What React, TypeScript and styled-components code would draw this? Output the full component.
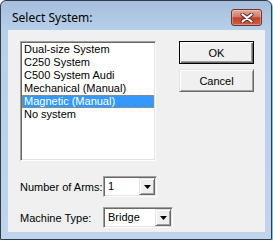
import React from 'react';
import styled, { createGlobalStyle } from 'styled-components';

const GlobalStyle = createGlobalStyle`
  html, body {
    margin: 0;
    padding: 0;
    background: #ffffff;
  }
  body {
    font-family: "Liberation Sans", Arial, sans-serif;
    font-size: 11px;
    color: #000;
  }
`;

const Window = styled.div`
  width: 272px;
  height: 240px;
  box-sizing: border-box;
  border: 1px solid #303c4a;
  border-radius: 6px 6px 0 0;
  background: linear-gradient(#a5bfdc, #b7cfe9 29px, #c0d5ec);
  box-shadow: 1px 1px 0 #5ed2e4;
  display: flex;
  flex-direction: column;
  padding: 0 6px 7px 7px;
`;

const TitleBar = styled.div`
  height: 29px;
  display: flex;
  align-items: flex-start;
  justify-content: space-between;
  padding: 8px 3px 0 4px;
  box-sizing: border-box;
`;

const Title = styled.span`
  font-family: "Noto Sans", "Open Sans", sans-serif;
  font-size: 12px;
  line-height: 16px;
  margin-top: 1px;
  color: #000;
`;

const CloseButton = styled.div`
  width: 31px;
  height: 17px;
  box-sizing: border-box;
  border: 1px solid #74332a;
  border-radius: 3px;
  background: linear-gradient(#e7a999, #d27a68 45%, #c0422d 52%, #cf5f48);
  box-shadow: inset 0 0 0 1px rgba(255, 255, 255, 0.3);
  display: flex;
  align-items: center;
  justify-content: center;
`;

const Client = styled.div`
  flex: 1;
  background: #f0f0f0;
  padding: 11px 0 0 12px;
`;

const TopRow = styled.div`
  display: flex;
  align-items: flex-start;
  gap: 23px;
`;

const ListBox = styled.div`
  width: 136px;
  height: 120px;
  box-sizing: border-box;
  background: #fff;
  border-style: solid;
  border-width: 1px;
  border-color: #a0a0a0 #fff #fff #a0a0a0;
  box-shadow: inset 1px 1px 0 #696969, inset -1px -1px 0 #e3e3e3;
  padding: 1px;
`;

const ListItem = styled.div<{ $selected?: boolean }>`
  height: 13px;
  line-height: 13px;
  padding-left: 2px;
  box-sizing: border-box;
  white-space: nowrap;
  background: ${p => (p.$selected ? '#3399ff' : 'transparent')};
  color: ${p => (p.$selected ? '#fff' : '#000')};
  outline: ${p => (p.$selected ? '1px dotted #c9823a' : 'none')};
  outline-offset: -1px;
`;

const ButtonColumn = styled.div`
  display: flex;
  flex-direction: column;
  gap: 5px;
`;

const PushButton = styled.div<{ $default?: boolean }>`
  width: 75px;
  height: 23px;
  box-sizing: border-box;
  background: #f0f0f0;
  display: flex;
  align-items: center;
  justify-content: center;
  border-style: solid;
  border-width: 1px;
  border-color: ${p => (p.$default ? '#000' : '#e3e3e3 #696969 #696969 #e3e3e3')};
  box-shadow: ${p =>
    p.$default
      ? 'inset 1px 1px 0 #fff, inset -1px -1px 0 #696969, inset -2px -2px 0 #a0a0a0'
      : 'inset 1px 1px 0 #fff, inset -1px -1px 0 #a0a0a0'};
`;

const Form = styled.div`
  margin-top: 15px;
  display: grid;
  grid-template-columns: 83px auto;
  row-gap: 10px;
  align-items: center;
`;

const Label = styled.span`
  white-space: nowrap;
`;

const Combo = styled.div<{ $width: number }>`
  width: ${p => p.$width}px;
  height: 21px;
  box-sizing: border-box;
  background: #fff;
  border-style: solid;
  border-width: 1px;
  border-color: #a0a0a0 #fff #fff #a0a0a0;
  box-shadow: inset 1px 1px 0 #696969, inset -1px -1px 0 #e3e3e3;
  display: flex;
  align-items: center;
  padding: 1px;
`;

const ComboText = styled.span`
  flex: 1;
  padding-left: 3px;
  line-height: 13px;
`;

const DropButton = styled.div`
  width: 16px;
  height: 17px;
  box-sizing: border-box;
  background: #f0f0f0;
  border-style: solid;
  border-width: 1px;
  border-color: #e3e3e3 #696969 #696969 #e3e3e3;
  box-shadow: inset 1px 1px 0 #fff, inset -1px -1px 0 #a0a0a0;
  display: flex;
  align-items: center;
  justify-content: center;
`;

const Arrow = () => (
  <svg width="7" height="4" viewBox="0 0 7 4">
    <path d="M0 0 H7 L3.5 4 Z" fill="#000" />
  </svg>
);

const systems = [
  'Dual-size System',
  'C250 System',
  'C500 System Audi',
  'Mechanical (Manual)',
  'Magnetic (Manual)',
  'No system',
];

export default function App() {
  const selected = 4;
  return (
    <>
      <GlobalStyle />
      <Window>
        <TitleBar>
          <Title>Select System:</Title>
          <CloseButton>
            <svg width="14" height="10" viewBox="0 0 14 10">
              <path d="M2.5 1.5 L11.5 8.5 M11.5 1.5 L2.5 8.5" stroke="#5b2a24" strokeWidth="4" strokeLinecap="round" />
              <path d="M2.5 1.5 L11.5 8.5 M11.5 1.5 L2.5 8.5" stroke="#fff" strokeWidth="2.2" strokeLinecap="round" />
            </svg>
          </CloseButton>
        </TitleBar>
        <Client>
          <TopRow>
            <ListBox>
              {systems.map((s, i) => (
                <ListItem key={s} $selected={i === selected}>{s}</ListItem>
              ))}
            </ListBox>
            <ButtonColumn>
              <PushButton $default>OK</PushButton>
              <PushButton>Cancel</PushButton>
            </ButtonColumn>
          </TopRow>
          <Form>
            <Label>Number of Arms:</Label>
            <Combo $width={54}>
              <ComboText>1</ComboText>
              <DropButton><Arrow /></DropButton>
            </Combo>
            <Label>Machine Type:</Label>
            <Combo $width={70}>
              <ComboText>Bridge</ComboText>
              <DropButton><Arrow /></DropButton>
            </Combo>
          </Form>
        </Client>
      </Window>
    </>
  );
}
